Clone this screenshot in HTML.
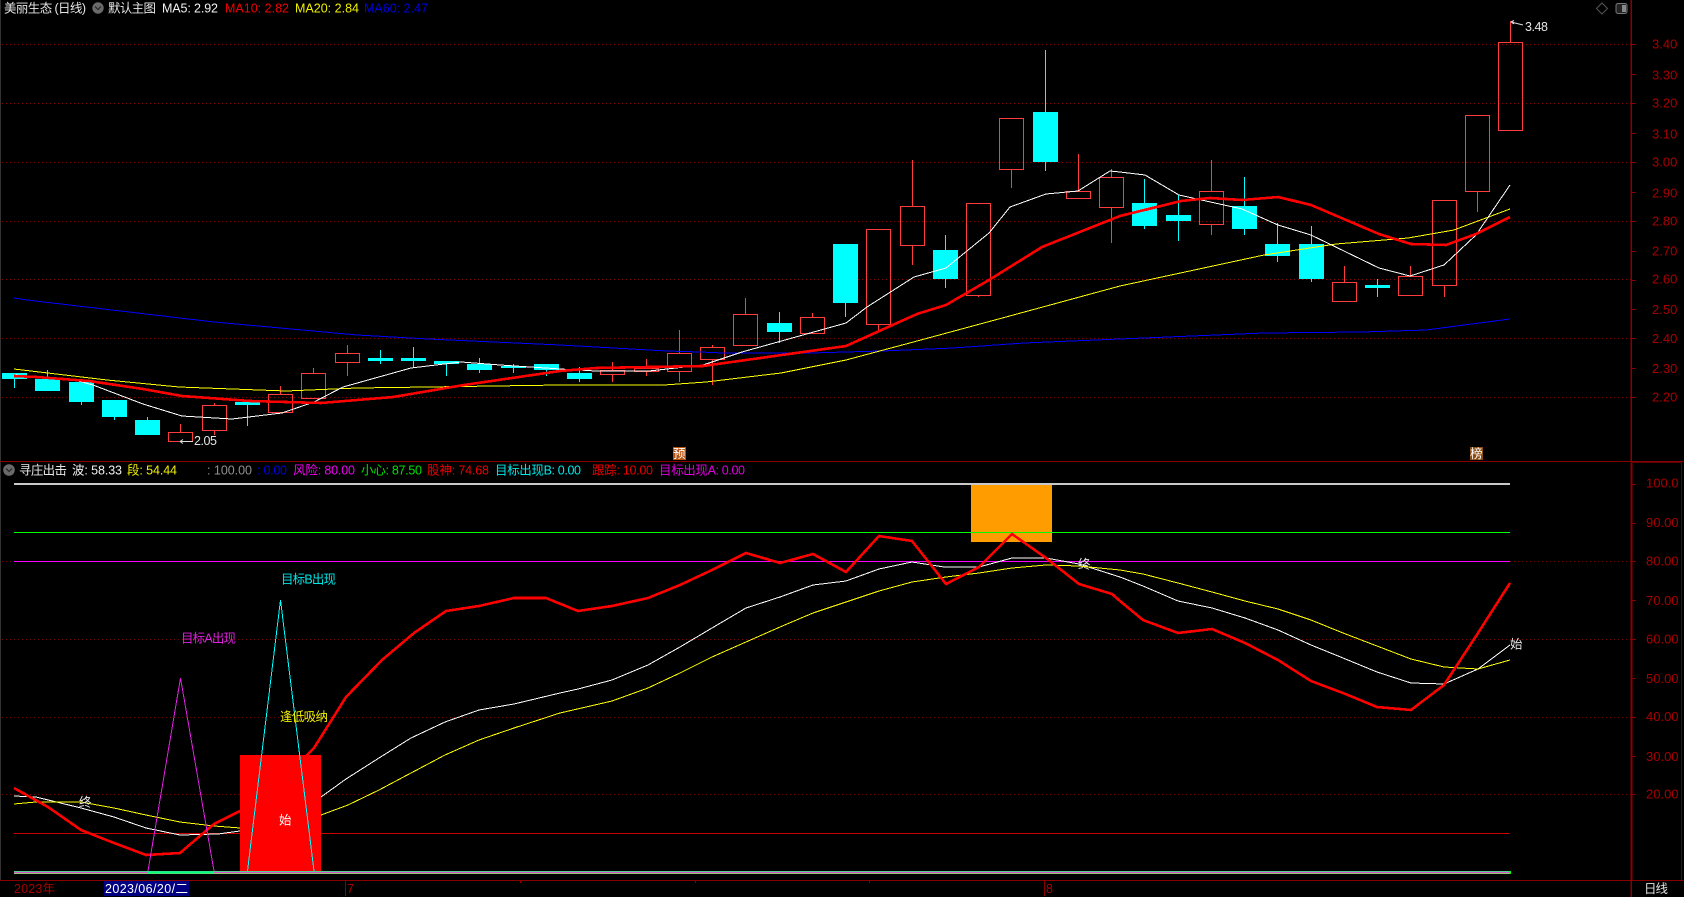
<!DOCTYPE html>
<html lang="zh">
<head>
<meta charset="utf-8">
<title>美丽生态 (日线)</title>
<style>
html,body{margin:0;padding:0;background:#000;width:1684px;height:897px;overflow:hidden}
svg{display:block}
text{font-family:"Liberation Sans","Noto Sans CJK SC",sans-serif;font-size:12.5px}
.ax{fill:#a80000;font-size:13px}
.c{shape-rendering:crispEdges}
</style>
</head>
<body>
<svg width="1684" height="897" viewBox="0 0 1684 897" xmlns="http://www.w3.org/2000/svg">
<rect width="1684" height="897" fill="#000"/>

<g class="c" fill="none">
<!-- frame -->
<path d="M0.5 0V880" stroke="#333"/>
<!-- upper dotted grid -->
<path d="M2 44.5H1631M2 103.5H1631M2 162.5H1631M2 221.5H1631M2 279.5H1631M2 338.5H1631M2 397.5H1631" stroke="#8a0000" stroke-dasharray="1 3"/>
<!-- lower dotted grid -->
<path d="M2 561.5H1631M2 639.5H1631M2 717.5H1631M2 794.5H1631" stroke="#7a0000" stroke-dasharray="1 3"/>

<!-- axis lines -->
<path d="M0 461.5H1684M0 880.5H1684" stroke="#8a0000"/>
<path d="M1631 0V897" stroke="#8a0000" stroke-width="1.5"/>
<path d="M1632 462V880" stroke="#8a0000"/>
<path d="M1631 462.5H1682M1681.5 462V880" stroke="#600000"/>
<path d="M1631 44.5h5M1631 74.5h5M1631 103.5h5M1631 133.5h5M1631 162.5h5M1631 192.5h5M1631 221.5h5M1631 251.5h5M1631 280.5h5M1631 309.5h5M1631 338.5h5M1631 368.5h5M1631 397.5h5" stroke="#8a0000"/>
<path d="M1631 484.5h5M1631 523.5h5M1631 561.5h5M1631 600.5h5M1631 639.5h5M1631 678.5h5M1631 717.5h5M1631 756.5h5M1631 794.5h5" stroke="#8a0000"/>
<path d="M345.5 881V896M1044.5 881V896M695.5 880V883M869.5 880V883M520.5 880V883" stroke="#8a0000"/>

<!-- red candles: outlines -->
<path stroke="#ff3c3c" d="
M168.5 432.5H192.5V441.5H168.5ZM180.5 424V432
M202.5 405.5H226.5V430.5H202.5ZM214.5 403V405M214.5 431V435
M268.5 394.5H292.5V412.5H268.5ZM280.5 386V394
M301.5 373.5H325.5V398.5H301.5ZM313.5 368V373
M335.5 353.5H359.5V362.5H335.5ZM347.5 345V353M347.5 363V376
M600.5 370.5H624.5V374.5H600.5ZM612.5 362V370M612.5 375V382
M634.5 368.5H658.5V371.5H634.5ZM646.5 359V368M646.5 372V376
M667.5 353.5H691.5V371.5H667.5ZM679.5 330V353M679.5 372V382
M700.5 347.5H724.5V359.5H700.5ZM712.5 345V347M712.5 360V385
M733.5 314.5H757.5V345.5H733.5ZM745.5 298V314
M800.5 317.5H824.5V333.5H800.5ZM812.5 313V317
M866.5 229.5H890.5V324.5H866.5ZM878.5 325V330
M900.5 206.5H924.5V245.5H900.5ZM912.5 160V206M912.5 246V265
M966.5 203.5H990.5V295.5H966.5ZM978.5 296V297
M999.5 118.5H1023.5V169.5H999.5ZM1011.5 170V188
M1066.5 191.5H1090.5V198.5H1066.5ZM1078.5 154V191
M1099.5 177.5H1123.5V207.5H1099.5ZM1111.5 169V177M1111.5 208V243
M1199.5 191.5H1223.5V224.5H1199.5ZM1211.5 160V191M1211.5 225V235
M1332.5 282.5H1356.5V301.5H1332.5ZM1344.5 266V282
M1398.5 276.5H1422.5V295.5H1398.5ZM1410.5 266V276
M1432.5 200.5H1456.5V285.5H1432.5ZM1444.5 286V297
M1465.5 115.5H1489.5V191.5H1465.5ZM1477.5 192V212
M1498.5 42.5H1522.5V130.5H1498.5ZM1510.5 21V42"/>

<!-- cyan candles -->
<path fill="#00ffff" d="M2 373h25v6h-25zM35 379h25v12h-25zM69 382h25v20h-25zM102 400h25v17h-25zM135 420h25v15h-25zM235 402h25v3h-25zM368 358h25v3h-25zM401 358h25v3h-25zM434 361h25v3h-25zM467 364h25v6h-25zM501 366h25v2h-25zM534 364h25v6h-25zM567 373h25v6h-25zM767 323h25v9h-25zM833 244h25v59h-25zM933 250h25v29h-25zM1033 112h25v50h-25zM1132 203h25v23h-25zM1166 215h25v6h-25zM1232 206h25v23h-25zM1265 244h25v12h-25zM1299 244h25v35h-25zM1365 285h25v3h-25z"/>
<path stroke="#00ffff" d="M14.5 373V388M47.5 370V391M81.5 382V405M114.5 400V420M147.5 417V435M247.5 402V426M380.5 350V364M413.5 347V367M446.5 361V376M479.5 358V373M513.5 364V373M546.5 364V376M579.5 367V382M779.5 312V343M845.5 244V317M945.5 235V288M1045.5 50V171M1144.5 179V229M1178.5 195V241M1244.5 177V235M1277.5 223V262M1311.5 226V282M1377.5 279V297"/>

<!-- MA60 -->
<polyline stroke="#0000ff" points="14,298 27,300 214,322 357,335 428,339 560,345 667,351 700,352 724,353 810,353 881,351 953,348 1024,343 1120,339 1264,333 1361,332 1426,330 1510,319"/>
<!-- MA20 -->
<polyline stroke="#ffff00" points="14,369 107,380 179,387 286,391 357,388 428,387 560,385 664,385 706,382 781,373 846,360 906,344 1006,317 1120,286 1264,255 1336,244 1408,238 1454,230 1510,209"/>
<!-- MA5 -->
<polyline stroke="#ffffff" points="14,375 71,379 93,385 143,404 182,416 232,419 282,413 314,402 343,387 411,368 461,362 500,365 560,369 596,371 649,371 703,365 742,352 846,323 867,307 914,277 946,268 989,233 1010,207 1046,194 1078,191 1110,171 1120,172 1145,175 1179,195 1242,209 1278,225 1311,235 1379,268 1410,276 1444,265 1476,235 1510,185"/>
<!-- MA10 -->
<polyline stroke="#ff0000" stroke-width="2.6" points="14,376 36,377 89,381 143,389 182,396 250,401 321,403 393,397 464,385 560,371 596,368 703,366 739,361 846,346 917,314 946,305 989,280 1042,247 1120,216 1181,201 1210,198 1242,200 1278,197 1311,205 1379,234 1411,244 1446,245 1476,234 1510,217"/>

<!-- lower horizontal levels -->
<path stroke="#c8c8c8" stroke-width="2" d="M14 484H1510"/>
<path stroke="#00ff00" d="M14 532.5H1510"/>
<path stroke="#ff00ff" d="M14 561.5H1510"/>
<path stroke="#c80000" d="M14 833.5H1510"/>
<path stroke="#55d090" d="M14 871.5H1510"/>
<path stroke="#d050d0" d="M14 872.5H1510"/>
<path stroke="#9acb70" d="M14 873.5H1510"/>
<path stroke="#00ff80" stroke-width="2" d="M148 872.5H214"/>
<rect x="1509" y="871" width="2" height="3" fill="#00ff00" stroke="none"/>

<!-- white / yellow / red oscillators -->
<polyline stroke="#ffffff" points="14,796 36,797 81,808 114,817 146,828 180,835 218,834 240,831 321,797 346,779 379,758 411,738 445,722 479,710 514,704 560,693 578,689 612,680 648,665 680,647 712,628 746,608 780,597 813,585 846,581 879,569 912,562 944,567 979,567 1012,558 1046,558 1079,564 1120,577 1143,586 1178,601 1212,608 1245,618 1278,630 1311,645 1343,658 1377,672 1411,683 1444,684 1478,669 1510,645"/>
<polyline stroke="#ffff00" points="14,804 36,802 81,802 114,808 146,815 180,822 214,826 240,828 321,815 348,805 379,790 411,773 445,755 479,740 514,728 560,713 612,701 648,688 680,673 712,657 746,642 780,627 813,613 846,602 879,591 912,582 946,577 979,573 1012,568 1046,565 1079,566 1120,570 1143,574 1178,583 1212,592 1245,601 1278,609 1311,620 1343,633 1377,646 1411,659 1444,667 1478,669 1510,660"/>
<polyline stroke="#ff0000" stroke-width="2.6" points="14,788 48,807 81,830 114,843 146,855 180,853 214,824 240,811 280,780 307,755 314,748 346,697 382,660 414,633 446,611 479,606 514,598 546,598 578,611 612,606 648,598 680,585 712,570 746,553 780,563 813,554 846,572 879,536 912,541 946,584 979,567 1012,534 1046,558 1079,584 1112,594 1120,601 1143,620 1178,633 1212,629 1245,643 1278,660 1311,681 1343,693 1377,707 1411,710 1444,685 1478,633 1510,583"/>

<!-- red + orange blocks -->
<rect x="240" y="755" width="81" height="116" fill="#ff0000" stroke="none"/>
<rect x="971" y="485" width="81" height="57" fill="#ff9c00" stroke="none"/>
<path stroke="#00ff00" d="M971 532.5H1052"/>
<polyline stroke="#ff0000" stroke-width="2.6" points="979,567 1012,534 1046,558"/>

<!-- triangles -->
<polyline stroke="#e020e0" points="148,871 180.5,678 214,871"/>
<polyline stroke="#00ffff" points="247.5,871 280.5,600 314,871"/>

<!-- date box -->
<rect x="104" y="881" width="85" height="15" fill="#000080" stroke="none"/>
</g>

<!-- top-right icons -->
<path d="M1602 3l5.5 5.5-5.5 5.5-5.5-5.5z" fill="none" stroke="#555"/>
<rect x="1616" y="3.5" width="11" height="10" rx="2" fill="#222" stroke="#777"/>
<rect x="1622" y="5" width="4" height="7" fill="#888"/>

<!-- high / low arrows -->
<path d="M1511 22l12 3M1511 22l3-1.5M1511 22l3 2" fill="none" stroke="#ddd"/>
<path d="M180 441.5h13M180 441.5l3-2M180 441.5l3 2" fill="none" stroke="#ddd"/>

<!-- header upper -->
<text x="4" y="12.5" fill="#e6e6e6" textLength="82" lengthAdjust="spacing">美丽生态 (日线)</text>
<circle cx="98" cy="8" r="5.7" fill="#6a6a6a"/>
<path d="M95 6.5l3 3 3-3" fill="none" stroke="#2c2c2c" stroke-width="1.3"/>
<text x="108" y="12.5" fill="#e6e6e6" textLength="48" lengthAdjust="spacing">默认主图</text>
<text x="162" y="12.5" fill="#f4f4f4" textLength="56" lengthAdjust="spacing">MA5: 2.92</text>
<text x="225" y="12.5" fill="#f00000" textLength="64" lengthAdjust="spacing">MA10: 2.82</text>
<text x="295" y="12.5" fill="#f0f000" textLength="64" lengthAdjust="spacing">MA20: 2.84</text>
<text x="364" y="12.5" fill="#0000e0" textLength="64" lengthAdjust="spacing">MA60: 2.47</text>

<!-- header lower -->
<circle cx="9" cy="470" r="5.8" fill="#6a6a6a"/>
<path d="M6 468.5l3 3 3-3" fill="none" stroke="#2c2c2c" stroke-width="1.3"/>
<text x="19" y="474.5" fill="#e6e6e6" textLength="48" lengthAdjust="spacing">寻庄出击</text>
<text x="72" y="474.5" fill="#f0f0f0" textLength="50" lengthAdjust="spacing">波: 58.33</text>
<text x="127" y="474.5" fill="#f0f000" textLength="50" lengthAdjust="spacing">段: 54.44</text>
<text x="207" y="474.5" fill="#909090" textLength="45" lengthAdjust="spacing">: 100.00</text>
<text x="257" y="474.5" fill="#0000e0" textLength="30" lengthAdjust="spacing">: 0.00</text>
<text x="293" y="474.5" fill="#f000f0" textLength="62" lengthAdjust="spacing">风险: 80.00</text>
<text x="361" y="474.5" fill="#00e000" textLength="61" lengthAdjust="spacing">小心: 87.50</text>
<text x="427" y="474.5" fill="#e80000" textLength="62" lengthAdjust="spacing">股神: 74.68</text>
<text x="495" y="474.5" fill="#00e8e8" textLength="86" lengthAdjust="spacing">目标出现B: 0.00</text>
<text x="592" y="474.5" fill="#e80000" textLength="61" lengthAdjust="spacing">跟踪: 10.00</text>
<text x="659" y="474.5" fill="#e000e0" textLength="86" lengthAdjust="spacing">目标出现A: 0.00</text>

<!-- chart labels -->
<text x="194" y="445" fill="#e6e6e6" textLength="23" lengthAdjust="spacing">2.05</text>
<text x="1525" y="31" fill="#e6e6e6" textLength="23" lengthAdjust="spacing">3.48</text>

<rect x="673" y="447" width="13" height="13" fill="#b85410"/>
<text x="673" y="458" fill="#fff" style="font-size:12.5px">预</text>
<rect x="1470" y="447" width="13" height="13" fill="#8a4a10"/>
<text x="1470" y="458" fill="#fff" style="font-size:12.5px">榜</text>

<text x="181" y="642.5" fill="#e020e0" textLength="55" lengthAdjust="spacing">目标A出现</text>
<text x="281" y="583.5" fill="#00e8e8" textLength="55" lengthAdjust="spacing">目标B出现</text>
<text x="280" y="721" fill="#f0f000" textLength="48" lengthAdjust="spacing">逢低吸纳</text>
<text x="79" y="806.5" fill="#e6e6e6">终</text>
<text x="279" y="824.5" fill="#fff">始</text>
<text x="1078" y="568.5" fill="#e6e6e6">终</text>
<text x="1510" y="648.5" fill="#e6e6e6">始</text>

<!-- right axis upper -->
<text class="ax" x="1652" y="48.5">3.40</text>
<text class="ax" x="1652" y="79.5">3.30</text>
<text class="ax" x="1652" y="107.5">3.20</text>
<text class="ax" x="1652" y="138.5">3.10</text>
<text class="ax" x="1652" y="166.5">3.00</text>
<text class="ax" x="1652" y="197.5">2.90</text>
<text class="ax" x="1652" y="225.5">2.80</text>
<text class="ax" x="1652" y="255.5">2.70</text>
<text class="ax" x="1652" y="283.5">2.60</text>
<text class="ax" x="1652" y="314">2.50</text>
<text class="ax" x="1652" y="343">2.40</text>
<text class="ax" x="1652" y="373">2.30</text>
<text class="ax" x="1652" y="401.5">2.20</text>

<!-- right axis lower -->
<text class="ax" x="1646" y="487.5">100.0</text>
<text class="ax" x="1646" y="527">90.00</text>
<text class="ax" x="1646" y="565.5">80.00</text>
<text class="ax" x="1646" y="605">70.00</text>
<text class="ax" x="1646" y="643.5">60.00</text>
<text class="ax" x="1646" y="683">50.00</text>
<text class="ax" x="1646" y="721">40.00</text>
<text class="ax" x="1646" y="761">30.00</text>
<text class="ax" x="1646" y="798.5">20.00</text>

<!-- bottom axis -->
<text x="14" y="893" fill="#a80000" textLength="41" lengthAdjust="spacing">2023年</text>
<text x="105" y="893" fill="#fff" textLength="83" lengthAdjust="spacing">2023/06/20/二</text>
<text x="347" y="893" fill="#a80000">7</text>
<text x="1046" y="893" fill="#a80000">8</text>
<text x="1644" y="893" fill="#e0e0e0" textLength="24" lengthAdjust="spacing">日线</text>
</svg>
</body>
</html>
